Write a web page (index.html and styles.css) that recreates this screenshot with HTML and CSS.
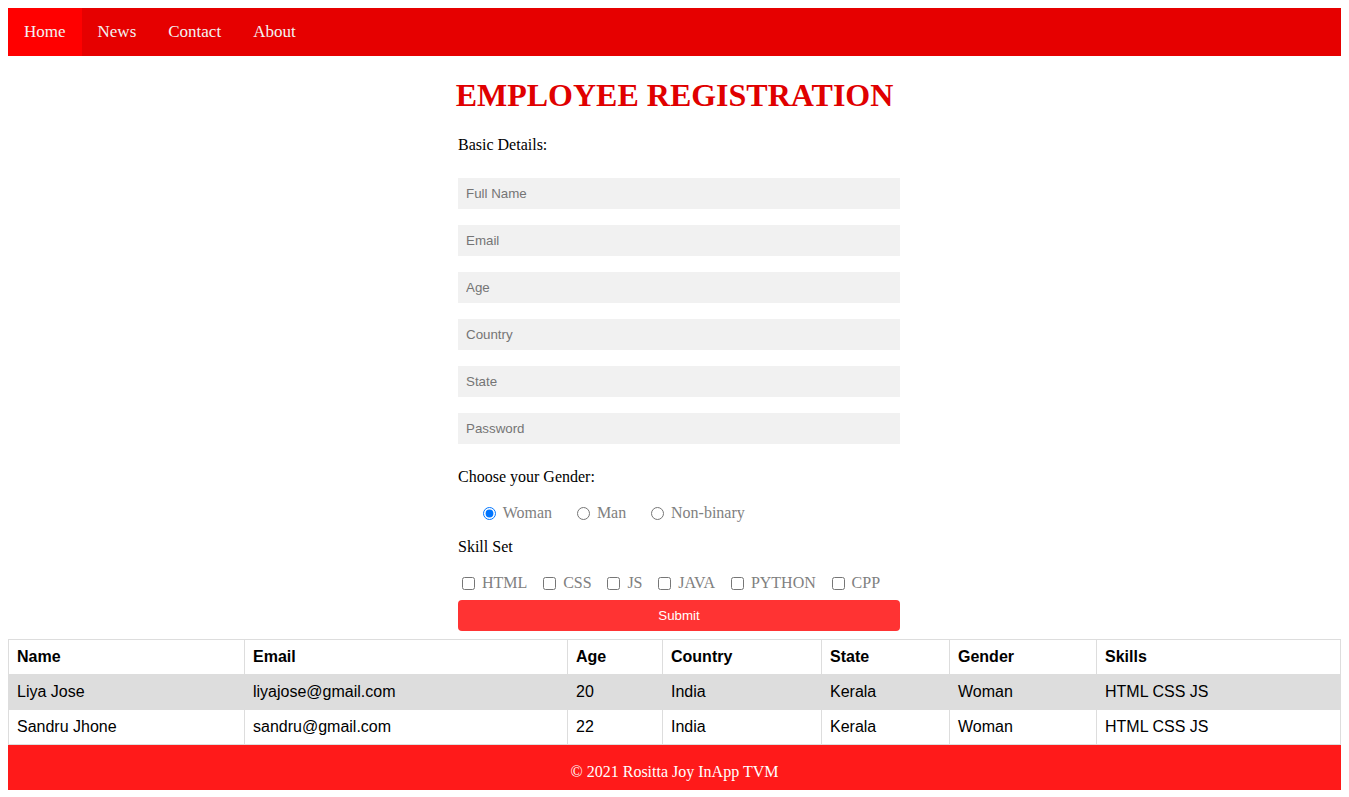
FILE: index.html
```html
<!DOCTYPE html>
<html lang="en">
<head>
<meta charset="utf-8">
<title>Employee Registration</title>
<link rel="stylesheet" href="styles.css">
</head>
<body>
<nav class="topnav">
  <a class="active" href="#">Home</a>
  <a href="#">News</a>
  <a href="#">Contact</a>
  <a href="#">About</a>
</nav>

<h1 class="title">EMPLOYEE REGISTRATION</h1>

<form class="reg-form">
  <div class="section-label first">Basic Details:</div>
  <input class="field" type="text" placeholder="Full Name">
  <input class="field" type="text" placeholder="Email">
  <input class="field" type="text" placeholder="Age">
  <input class="field" type="text" placeholder="Country">
  <input class="field" type="text" placeholder="State">
  <input class="field" type="password" placeholder="Password">

  <div class="section-label gender-label">Choose your Gender:</div>
  <div class="radio-row">
    <label class="opt"><input type="radio" name="g" checked> Woman</label>
    <label class="opt"><input type="radio" name="g"> Man</label>
    <label class="opt"><input type="radio" name="g"> Non-binary</label>
  </div>

  <div class="section-label skill-label">Skill Set</div>
  <div class="check-row">
    <label class="chk"><input type="checkbox"> HTML</label>
    <label class="chk"><input type="checkbox"> CSS</label>
    <label class="chk"><input type="checkbox"> JS</label>
    <label class="chk"><input type="checkbox"> JAVA</label>
    <label class="chk"><input type="checkbox"> PYTHON</label>
    <label class="chk"><input type="checkbox"> CPP</label>
  </div>

  <button class="submit" type="button">Submit</button>
</form>

<table class="emp-table">
  <colgroup>
    <col class="c1"><col class="c2"><col class="c3"><col class="c4"><col class="c5"><col class="c6"><col class="c7">
  </colgroup>
  <thead>
    <tr><th>Name</th><th>Email</th><th>Age</th><th>Country</th><th>State</th><th>Gender</th><th>Skills</th></tr>
  </thead>
  <tbody>
    <tr class="shade"><td>Liya Jose</td><td>liyajose@gmail.com</td><td>20</td><td>India</td><td>Kerala</td><td>Woman</td><td>HTML CSS JS</td></tr>
    <tr><td>Sandru Jhone</td><td>sandru@gmail.com</td><td>22</td><td>India</td><td>Kerala</td><td>Woman</td><td>HTML CSS JS</td></tr>
  </tbody>
</table>

<footer class="footer">© 2021 Rositta Joy InApp TVM</footer>
</body>
</html>
```

FILE: styles.css
```css
html, body {
  background: #fff;
}
body {
  margin: 8px 8px 0;
  font-family: "Liberation Serif", "Times New Roman", serif;
  font-size: 16px;
  color: #000;
}

.topnav {
  display: flex;
  height: 48px;
  background: #e60000;
}
.topnav a {
  display: block;
  padding: 0 16px;
  line-height: 47px;
  color: #f2f2f2;
  text-decoration: none;
  font-size: 17px;
}
.topnav a.active {
  background: #ff0000;
}

.title {
  margin: 21px 0 0;
  text-align: center;
  font-size: 32px;
  font-weight: bold;
  color: #e00000;
  line-height: 37px;
}

.reg-form {
  width: 442px;
  margin: 0 auto;
  padding-left: 9px;
  display: flex;
  flex-direction: column;
}
.section-label {
  line-height: 18px;
  height: 18px;
}
.section-label.first {
  margin-top: 22px;
}
.field {
  display: block;
  box-sizing: border-box;
  width: 100%;
  height: 31px;
  margin: 0;
  padding: 0 8px;
  border: none;
  background: #f1f1f1;
  font-family: "Liberation Sans", Arial, sans-serif;
  font-size: 13.333px;
  color: #333;
  outline: none;
}
.field + .field {
  margin-top: 16px;
}
.reg-form .field:first-of-type {
  margin-top: 24px;
}
.gender-label {
  margin-top: 24px;
}
.radio-row {
  display: flex;
  align-items: center;
  height: 18px;
  margin-top: 18px;
  padding-left: 20px;
}
.opt {
  display: inline-flex;
  align-items: center;
  color: #808080;
  margin-right: 19.8px;
  white-space: pre;
}
.opt input {
  margin: 0 3px 0 5px;
  width: 13px;
  height: 13px;
}
.skill-label {
  margin-top: 16px;
}
.check-row {
  display: flex;
  align-items: center;
  height: 18px;
  margin-top: 18px;
}
.chk {
  display: inline-flex;
  align-items: center;
  color: #808080;
  margin-right: 11.8px;
  white-space: pre;
}
.chk input {
  margin: 0 3px 0 4px;
  width: 13px;
  height: 13px;
}
.submit {
  margin-top: 8px;
  height: 31px;
  width: 100%;
  border: none;
  border-radius: 4px;
  background: #ff3333;
  color: #fff;
  font-family: "Liberation Sans", Arial, sans-serif;
  font-size: 13.333px;
  padding: 0;
}

.emp-table {
  width: 100%;
  margin-top: 8px;
  border-collapse: collapse;
  table-layout: fixed;
  font-family: "Liberation Sans", Arial, sans-serif;
  font-size: 16px;
}
.emp-table col.c1 { width: 236px; }
.emp-table col.c2 { width: 323px; }
.emp-table col.c3 { width: 95px; }
.emp-table col.c4 { width: 159px; }
.emp-table col.c5 { width: 128px; }
.emp-table col.c6 { width: 147px; }
.emp-table col.c7 { width: auto; }
.emp-table th,
.emp-table td {
  border: 1px solid #ddd;
  padding: 8px;
  text-align: left;
  line-height: 18px;
  height: 18px;
}
.emp-table th {
  font-weight: bold;
}
.emp-table tr.shade td {
  background: #dddddd;
}

.footer {
  background: #ff1a1a;
  color: #fff;
  text-align: center;
  padding: 18px 0 9px;
  line-height: 18px;
}
```
